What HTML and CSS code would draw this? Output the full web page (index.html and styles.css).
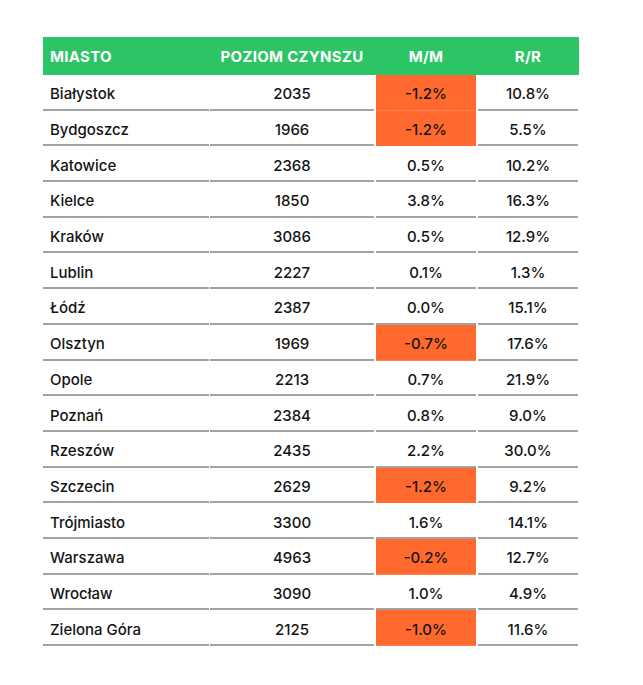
FILE: index.html
```html
<!DOCTYPE html>
<html lang="pl">
<head>
<meta charset="utf-8">
<title>Poziom czynszu</title>
<link rel="stylesheet" href="styles.css">
</head>
<body>
<table class="rent">
  <thead>
    <tr><th class="c-city">MIASTO</th><th>POZIOM CZYNSZU</th><th>M/M</th><th>R/R</th></tr>
  </thead>
  <tbody>
    <tr><td class="c-city">Białystok</td><td>2035</td><td class="neg">-1.2%</td><td>10.8%</td></tr>
    <tr><td class="c-city">Bydgoszcz</td><td>1966</td><td class="neg">-1.2%</td><td>5.5%</td></tr>
    <tr><td class="c-city">Katowice</td><td>2368</td><td>0.5%</td><td>10.2%</td></tr>
    <tr><td class="c-city">Kielce</td><td>1850</td><td>3.8%</td><td>16.3%</td></tr>
    <tr><td class="c-city">Kraków</td><td>3086</td><td>0.5%</td><td>12.9%</td></tr>
    <tr><td class="c-city">Lublin</td><td>2227</td><td>0.1%</td><td>1.3%</td></tr>
    <tr><td class="c-city">Łódź</td><td>2387</td><td>0.0%</td><td>15.1%</td></tr>
    <tr><td class="c-city">Olsztyn</td><td>1969</td><td class="neg">-0.7%</td><td>17.6%</td></tr>
    <tr><td class="c-city">Opole</td><td>2213</td><td>0.7%</td><td>21.9%</td></tr>
    <tr><td class="c-city">Poznań</td><td>2384</td><td>0.8%</td><td>9.0%</td></tr>
    <tr><td class="c-city">Rzeszów</td><td>2435</td><td>2.2%</td><td>30.0%</td></tr>
    <tr><td class="c-city">Szczecin</td><td>2629</td><td class="neg">-1.2%</td><td>9.2%</td></tr>
    <tr><td class="c-city">Trójmiasto</td><td>3300</td><td>1.6%</td><td>14.1%</td></tr>
    <tr><td class="c-city">Warszawa</td><td>4963</td><td class="neg">-0.2%</td><td>12.7%</td></tr>
    <tr><td class="c-city">Wrocław</td><td>3090</td><td>1.0%</td><td>4.9%</td></tr>
    <tr><td class="c-city">Zielona Góra</td><td>2125</td><td class="neg">-1.0%</td><td>11.6%</td></tr>
  </tbody>
</table>
</body>
</html>
```
FILE: styles.css
```css
html, body {
  margin: 0;
  padding: 0;
  background: #ffffff;
}
body {
  padding: 37px 0 0 43px;
  font-family: Inter, "Liberation Sans", sans-serif;
  color: #141414;
}
.rent {
  width: 536px;
  border-collapse: collapse;
  table-layout: fixed;
}
.rent th, .rent td {
  padding: 0;
  text-align: center;
  vertical-align: middle;
}
.rent th:nth-child(1), .rent td:nth-child(1) { width: 159px; }
.rent th:nth-child(2), .rent td:nth-child(2) { width: 166px; }
.rent th:nth-child(3), .rent td:nth-child(3) { width: 102px; }
.rent th:nth-child(4), .rent td:nth-child(4) { width: 102px; }

.rent thead th {
  height: 37px;
  padding-top: 1px;
  background: #2cc565;
  color: #ffffff;
  font-weight: 700;
  font-size: 15px;
  letter-spacing: 0.3px;
}
.rent tbody td {
  height: 33.7px;
  padding-top: 2px;
  font-size: 15px;
  font-weight: 500;
  background-image: linear-gradient(#a2a2a2, #a2a2a2);
  background-repeat: no-repeat;
  background-position: center bottom;
  background-size: calc(100% - 2px) 2px;
}
.rent .c-city {
  text-align: left;
  padding-left: 7px;
}
.rent tbody td.c-city {
  background-position: right bottom;
  background-size: calc(100% + 6px) 2px;
}
.rent tbody td.neg {
  background-image: linear-gradient(#ff692d, #ff692d);
  background-size: calc(100% - 2px) 100%;
  background-position: center;
}
```
